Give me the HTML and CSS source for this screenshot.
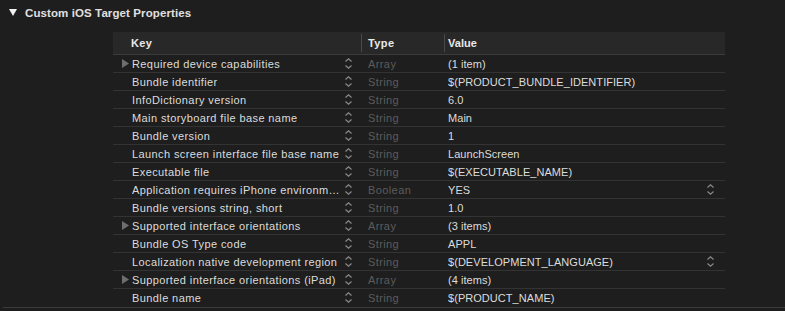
FILE: index.html
```html
<!DOCTYPE html>
<html>
<head>
<meta charset="utf-8">
<link rel="stylesheet" href="styles.css">
</head>
<body>
<div class="page">
  <div class="section-title">
    <svg class="disclosure" viewBox="0 0 8 7"><polygon points="0,0 8,0 4,7"/></svg>
    <span class="title-text">Custom iOS Target Properties</span>
  </div>
  <div class="table">
    <div class="row head">
      <div class="cell key"><span class="k">Key</span></div>
      <div class="cell type"><span class="div"></span>Type</div>
      <div class="cell value"><span class="div"></span>Value</div>
    </div>

    <div class="row">
      <div class="cell key"><svg class="tri" viewBox="0 0 7 9"><polygon points="0,0 7,4.5 0,9"/></svg><span class="k">Required device capabilities</span><svg class="step" viewBox="0 0 7 11"><path d="M0.5 3.5 L3.5 0.8 L6.5 3.5 M0.5 7.5 L3.5 10.2 L6.5 7.5"/></svg></div>
      <div class="cell type">Array</div>
      <div class="cell value">(1 item)</div>
    </div>
    <div class="row">
      <div class="cell key"><span class="k">Bundle identifier</span><svg class="step" viewBox="0 0 7 11"><path d="M0.5 3.5 L3.5 0.8 L6.5 3.5 M0.5 7.5 L3.5 10.2 L6.5 7.5"/></svg></div>
      <div class="cell type">String</div>
      <div class="cell value">$(PRODUCT_BUNDLE_IDENTIFIER)</div>
    </div>
    <div class="row">
      <div class="cell key"><span class="k">InfoDictionary version</span><svg class="step" viewBox="0 0 7 11"><path d="M0.5 3.5 L3.5 0.8 L6.5 3.5 M0.5 7.5 L3.5 10.2 L6.5 7.5"/></svg></div>
      <div class="cell type">String</div>
      <div class="cell value">6.0</div>
    </div>
    <div class="row">
      <div class="cell key"><span class="k">Main storyboard file base name</span><svg class="step" viewBox="0 0 7 11"><path d="M0.5 3.5 L3.5 0.8 L6.5 3.5 M0.5 7.5 L3.5 10.2 L6.5 7.5"/></svg></div>
      <div class="cell type">String</div>
      <div class="cell value">Main</div>
    </div>
    <div class="row">
      <div class="cell key"><span class="k">Bundle version</span><svg class="step" viewBox="0 0 7 11"><path d="M0.5 3.5 L3.5 0.8 L6.5 3.5 M0.5 7.5 L3.5 10.2 L6.5 7.5"/></svg></div>
      <div class="cell type">String</div>
      <div class="cell value">1</div>
    </div>
    <div class="row">
      <div class="cell key"><span class="k">Launch screen interface file base name</span><svg class="step" viewBox="0 0 7 11"><path d="M0.5 3.5 L3.5 0.8 L6.5 3.5 M0.5 7.5 L3.5 10.2 L6.5 7.5"/></svg></div>
      <div class="cell type">String</div>
      <div class="cell value">LaunchScreen</div>
    </div>
    <div class="row">
      <div class="cell key"><span class="k">Executable file</span><svg class="step" viewBox="0 0 7 11"><path d="M0.5 3.5 L3.5 0.8 L6.5 3.5 M0.5 7.5 L3.5 10.2 L6.5 7.5"/></svg></div>
      <div class="cell type">String</div>
      <div class="cell value">$(EXECUTABLE_NAME)</div>
    </div>
    <div class="row">
      <div class="cell key"><span class="k">Application requires iPhone environm…</span><svg class="step" viewBox="0 0 7 11"><path d="M0.5 3.5 L3.5 0.8 L6.5 3.5 M0.5 7.5 L3.5 10.2 L6.5 7.5"/></svg></div>
      <div class="cell type">Boolean</div>
      <div class="cell value">YES<svg class="step vstep" viewBox="0 0 7 11"><path d="M0.5 3.5 L3.5 0.8 L6.5 3.5 M0.5 7.5 L3.5 10.2 L6.5 7.5"/></svg></div>
    </div>
    <div class="row">
      <div class="cell key"><span class="k">Bundle versions string, short</span><svg class="step" viewBox="0 0 7 11"><path d="M0.5 3.5 L3.5 0.8 L6.5 3.5 M0.5 7.5 L3.5 10.2 L6.5 7.5"/></svg></div>
      <div class="cell type">String</div>
      <div class="cell value">1.0</div>
    </div>
    <div class="row">
      <div class="cell key"><svg class="tri" viewBox="0 0 7 9"><polygon points="0,0 7,4.5 0,9"/></svg><span class="k">Supported interface orientations</span><svg class="step" viewBox="0 0 7 11"><path d="M0.5 3.5 L3.5 0.8 L6.5 3.5 M0.5 7.5 L3.5 10.2 L6.5 7.5"/></svg></div>
      <div class="cell type">Array</div>
      <div class="cell value">(3 items)</div>
    </div>
    <div class="row">
      <div class="cell key"><span class="k">Bundle OS Type code</span><svg class="step" viewBox="0 0 7 11"><path d="M0.5 3.5 L3.5 0.8 L6.5 3.5 M0.5 7.5 L3.5 10.2 L6.5 7.5"/></svg></div>
      <div class="cell type">String</div>
      <div class="cell value">APPL</div>
    </div>
    <div class="row">
      <div class="cell key"><span class="k">Localization native development region</span><svg class="step" viewBox="0 0 7 11"><path d="M0.5 3.5 L3.5 0.8 L6.5 3.5 M0.5 7.5 L3.5 10.2 L6.5 7.5"/></svg></div>
      <div class="cell type">String</div>
      <div class="cell value">$(DEVELOPMENT_LANGUAGE)<svg class="step vstep" viewBox="0 0 7 11"><path d="M0.5 3.5 L3.5 0.8 L6.5 3.5 M0.5 7.5 L3.5 10.2 L6.5 7.5"/></svg></div>
    </div>
    <div class="row">
      <div class="cell key"><svg class="tri" viewBox="0 0 7 9"><polygon points="0,0 7,4.5 0,9"/></svg><span class="k">Supported interface orientations (iPad)</span><svg class="step" viewBox="0 0 7 11"><path d="M0.5 3.5 L3.5 0.8 L6.5 3.5 M0.5 7.5 L3.5 10.2 L6.5 7.5"/></svg></div>
      <div class="cell type">Array</div>
      <div class="cell value">(4 items)</div>
    </div>
    <div class="row last">
      <div class="cell key"><span class="k">Bundle name</span><svg class="step" viewBox="0 0 7 11"><path d="M0.5 3.5 L3.5 0.8 L6.5 3.5 M0.5 7.5 L3.5 10.2 L6.5 7.5"/></svg></div>
      <div class="cell type">String</div>
      <div class="cell value">$(PRODUCT_NAME)</div>
    </div>
  </div>
  <div class="bottom-rule"></div>
</div>
</body>
</html>
```

FILE: styles.css
```css
html, body {
  margin: 0;
  padding: 0;
  background: #1e1e1e;
}
body {
  font-family: "Liberation Sans", Arial, sans-serif;
  font-size: 11px;
  letter-spacing: 0.4px;
  color: #dcdcdc;
  width: 785px;
  height: 311px;
  overflow: hidden;
}
.page {
  display: flex;
  flex-direction: column;
}
.section-title {
  display: flex;
  align-items: center;
  height: 26px;
  padding-left: 9px;
  color: #e0e0e0;
}
.disclosure {
  width: 8px;
  height: 7px;
  margin-right: 8px;
  margin-top: -1px;
}
.disclosure polygon {
  fill: #f2f2f2;
}
.title-text {
  font-weight: bold;
  font-size: 11.5px;
  letter-spacing: 0.1px;
}
.table {
  margin-top: 6px;
  margin-left: 113px;
  width: 612px;
  display: flex;
  flex-direction: column;
}
.row {
  display: grid;
  grid-template-columns: 249px 83px 280px;
  height: 17px;
  border-bottom: 1px solid #333333;
  align-items: center;
}
.row.last {
  border-bottom: none;
}
.row.head {
  height: 22px;
  background: #282828;
  border-bottom: 1px solid #3c3c3c;
  font-weight: bold;
  color: #e8e8e8;
}
.cell {
  display: flex;
  align-items: center;
  height: 100%;
  white-space: nowrap;
  position: relative;
}
.key {
  padding-left: 19px;
}
.row.head .key { padding-left: 18px; }
.tri {
  position: absolute;
  left: 9px;
  top: 4px;
  width: 7px;
  height: 9px;
}
.tri polygon {
  fill: #6e6e6e;
}
.k {
  flex: 1;
  overflow: hidden;
}
.step {
  width: 7px;
  height: 11px;
  margin-right: 10px;
  flex: none;
}
.step path {
  fill: none;
  stroke: #8a8a8a;
  stroke-width: 1.2;
}
.type {
  color: #5c5c5c;
  padding-left: 6px;
}
.row.head .type, .row.head .value {
  color: #e8e8e8;
}
.value {
  padding-left: 3px;
  letter-spacing: 0.05px;
}
.vstep {
  margin-left: auto;
  margin-right: 11px;
}
.div {
  position: absolute;
  left: -1px;
  top: 2px;
  bottom: 2px;
  width: 1px;
  background: #4a4a4a;
}
.bottom-rule {
  margin-left: 3px;
  margin-top: 1px;
  height: 1px;
  background: #3a3a3a;
}
```
